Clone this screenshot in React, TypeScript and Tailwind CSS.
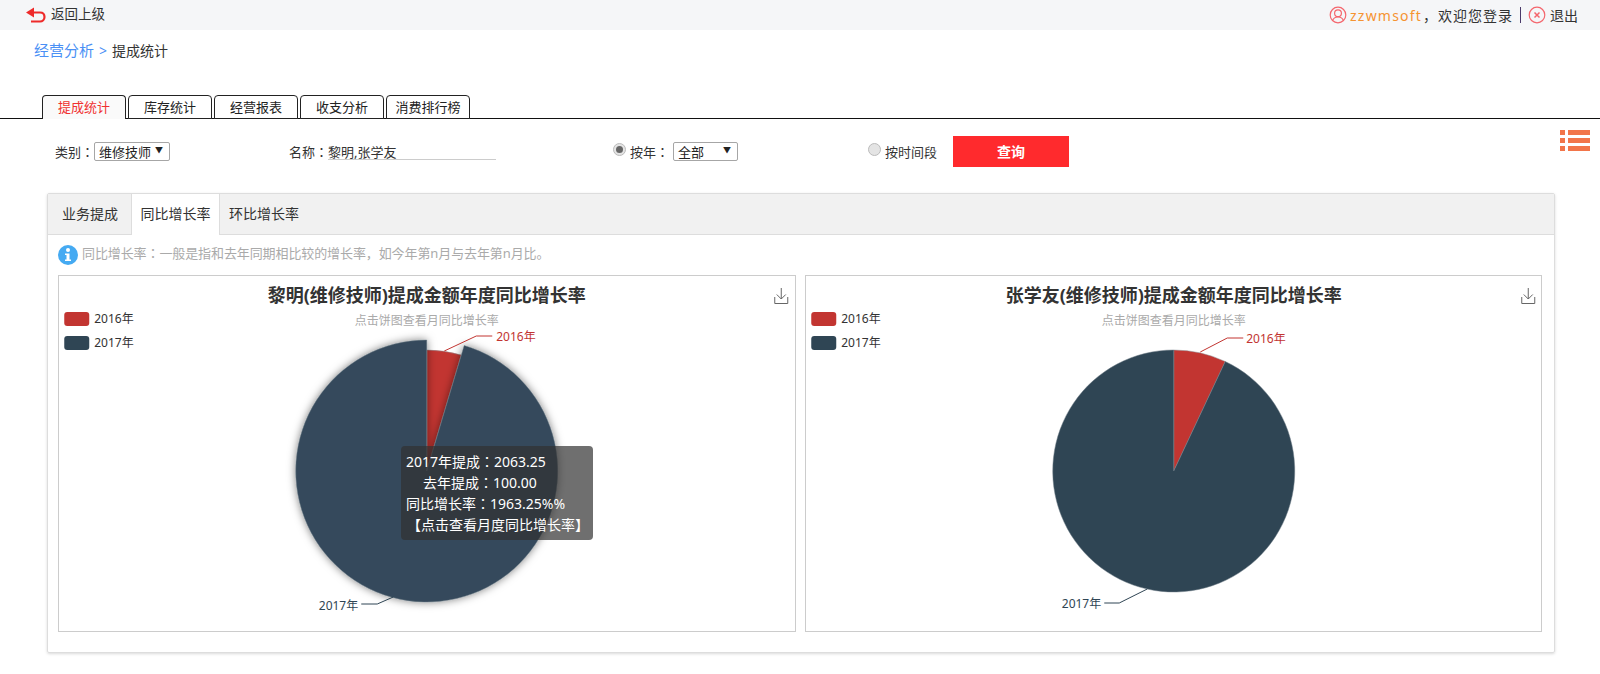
import { ReactNode } from "react"

const font = { fontFamily: '"Noto Sans", "Noto Sans CJK SC", sans-serif' }

type PieProps = {
  title: string
  redDeg: number
  hovered?: boolean
  line2016: string
  text2016: [number, number]
  line2017: string
  text2017: [number, number]
}

const cx = 367.5
const cy = 195

function pt(r: number, deg: number) {
  const a = (deg * Math.PI) / 180
  return [cx + r * Math.sin(a), cy - r * Math.cos(a)]
}

function slice(r: number, from: number, to: number) {
  const [x1, y1] = pt(r, from)
  const [x2, y2] = pt(r, to)
  const large = to - from > 180 ? 1 : 0
  return `M${cx} ${cy}L${x1} ${y1}A${r} ${r} 0 ${large} 1 ${x2} ${y2}Z`
}

// the fullwidth colon sits centred in the reference, as the TC face draws it
function Colon() {
  return <span className="font-['Noto_Sans_CJK_TC']">：</span>
}

function PieCard({ title, redDeg, hovered, line2016, text2016, line2017, text2017 }: PieProps) {
  return (
    <div className="relative flex-1 h-[357px] border border-[#ccc] bg-white">
      <svg width="100%" height="355" viewBox="0 0 735 355" style={font}>
        <defs>
          <filter id="pieShadow" x="-20%" y="-20%" width="140%" height="140%">
            <feDropShadow dx="0" dy="0" stdDeviation="4" floodColor="#000" floodOpacity="0.5" />
          </filter>
        </defs>
        <text x={cx} y="21" textAnchor="middle" dominantBaseline="middle" fontSize="18" fontWeight="700" fill="#333">{title}</text>
        <text x={cx} y="46" textAnchor="middle" dominantBaseline="middle" fontSize="12" fill="#aaa">点击饼图查看月同比增长率</text>

        <rect x="5" y="36" width="25" height="14" rx="3" fill="#c23531" />
        <text x="35" y="44" dominantBaseline="middle" fontSize="12" fill="#333">2016年</text>
        <rect x="5" y="60" width="25" height="14" rx="3" fill="#2f4554" />
        <text x="35" y="68" dominantBaseline="middle" fontSize="12" fill="#333">2017年</text>

        <path d={slice(121, 0, redDeg)} fill="#c23531" stroke="#8a8f94" strokeWidth="0.5" />
        <path
          d={slice(hovered ? 131 : 121, redDeg, 360)}
          fill={hovered ? "#34495b" : "#2f4554"}
          stroke="#6f7c86"
          strokeWidth="0.5"
          filter={hovered ? "url(#pieShadow)" : undefined}
        />

        <path d={line2016} fill="none" stroke="#c23531" />
        <text x={text2016[0]} y={text2016[1]} dominantBaseline="middle" fontSize="12" fill="#c23531">2016年</text>
        <path d={line2017} fill="none" stroke="#2f4554" />
        <text x={text2017[0]} y={text2017[1]} textAnchor="end" dominantBaseline="middle" fontSize="12" fill="#2f4554">2017年</text>

        <g transform="translate(715 12)" fill="none" stroke="#666" strokeWidth="1">
          <path d="M7 0V11M2.5 6.5L7 11L11.5 6.5" />
          <path d="M0.5 9V15.5H13.5V9" />
        </g>
      </svg>
      {hovered && (
        <div className="absolute left-[342px] top-[170px] w-[192px] h-[94px] rounded bg-[rgba(50,50,50,0.7)] py-[5px] text-[14px] leading-[21px] text-white whitespace-nowrap">
          <div className="pl-[5px]">2017年提成<Colon />2063.25</div>
          <div className="pl-[22px]">去年提成<Colon />100.00</div>
          <div className="pl-[5px]">同比增长率<Colon />1963.25%%</div>
          <div className="pl-[6px]">【点击查看月度同比增长率】</div>
        </div>
      )}
    </div>
  )
}

function Tab({ children, active }: { children: ReactNode; active?: boolean }) {
  return (
    <div
      className={`w-[84px] h-[24px] border border-[#222] rounded-t-[4px] text-center text-[13px] leading-[22px] ${
        active ? "border-b-0 bg-[#fafafa] text-[#f03030]" : "text-[#222] bg-white"
      }`}
    >
      {children}
    </div>
  )
}

function Radio({ checked }: { checked?: boolean }) {
  return (
    <span className="w-[13px] h-[13px] mb-[4px] rounded-full border border-[#bbb] bg-[#e4e4e4] flex items-center justify-center shrink-0">
      {checked && <span className="w-[7px] h-[7px] rounded-full bg-[#666]" />}
    </span>
  )
}

function FakeSelect({ label, width }: { label: string; width: string }) {
  return (
    <div className={`${width} h-[19px] border border-[#a6a6a6] rounded-[2px] flex items-center justify-between pl-[4px] pr-[6px] text-[13px] text-[#222] bg-white`}>
      <span className="pt-[2px]">{label}</span>
      <span className="text-[8px] leading-none mb-[3px]">▼</span>
    </div>
  )
}

export default function App() {
  return (
    <div className="w-[1600px] h-[674px] overflow-hidden bg-white text-[#333]" style={font}>
      <header className="h-[30px] bg-[#f5f6f8] flex items-center justify-between pl-[26px] pr-[22px] text-[14px]">
        <div className="flex items-center gap-[5px] text-[#333] text-[13.5px]">
          <svg width="20" height="16" viewBox="0 0 20 16" fill="none">
            <path d="M0 5.5L8 0.5V10.5Z" fill="#ee2a2a" />
            <path d="M7 5.5H14C17 5.5 18.5 7.5 18.5 10C18.5 12.5 16.5 14.5 14 14.5H5" stroke="#ee2a2a" strokeWidth="2.2" />
          </svg>
          <span className="pb-[1px]">返回上级</span>
        </div>
        <div className="flex items-center">
          <svg width="18" height="18" viewBox="0 0 18 18" fill="none" stroke="#f4666d" strokeWidth="1.2" className="mr-[3px]">
            <circle cx="9" cy="9" r="7.8" />
            <circle cx="9" cy="7.2" r="3.4" />
            <path d="M3.6 14.5C4.5 12 6.5 11 9 11C11.5 11 13.5 12 14.4 14.5" />
          </svg>
          <span className="text-[#f59331] tracking-[1.2px]">zzwmsoft</span>
          <span className="ml-[1px] tracking-[1px]">，欢迎您登录</span>
          <span className="ml-[7px] mr-[7px] w-px h-[16px] bg-[#4a3a6a]" />
          <svg width="18" height="18" viewBox="0 0 18 18" fill="none" stroke="#f4666d" strokeWidth="1.2" className="mr-[4px]">
            <circle cx="9" cy="9" r="7.8" />
            <path d="M6.5 6.5L11.5 11.5M11.5 6.5L6.5 11.5" strokeWidth="1.5" />
          </svg>
          <span>退出</span>
        </div>
      </header>

      <div className="pl-[34px] pt-[10px] h-[65px] text-[14px] leading-[20px]">
        <span className="text-[15px] text-[#4a90f5]">经营分析</span>
        <span className="text-[#4a90f5] mx-[5px]">&gt;</span>
        <span>提成统计</span>
      </div>

      <nav className="flex gap-[2px] pl-[42px] border-b border-[#111] h-[24px]">
        <Tab active>提成统计</Tab>
        <Tab>库存统计</Tab>
        <Tab>经营报表</Tab>
        <Tab>收支分析</Tab>
        <Tab>消费排行榜</Tab>
      </nav>

      <div className="relative flex items-center h-[31px] mt-[17px] pl-[55px] text-[13px]">
        <span className="pt-[2px]">类别<Colon /></span>
        <FakeSelect label="维修技师" width="w-[76px]" />
        <span className="ml-[119px] pt-[2px]">名称<Colon /></span>
        <span className="w-[168px] border-b border-[#ccc] leading-[14px] pt-[1px] text-[#333]">黎明,张学友</span>
        <span className="ml-[117px]"><Radio checked /></span>
        <span className="ml-[4px] mr-[4px] pt-[2px]">按年<Colon /></span>
        <FakeSelect label="全部" width="w-[65px]" />
        <span className="ml-[130px]"><Radio /></span>
        <span className="ml-[4px] pt-[2px]">按时间段</span>
        <button className="ml-[16px] w-[116px] h-[31px] bg-[#ff2a2d] text-white text-[14px] font-bold">查询</button>
        <svg width="30" height="21" viewBox="0 0 30 21" fill="#f2754a" className="absolute right-[10px] -top-[6px]">
          <rect x="0" y="0" width="5" height="5" />
          <rect x="8" y="0" width="22" height="5" />
          <rect x="0" y="8" width="5" height="5" />
          <rect x="8" y="8" width="22" height="5" />
          <rect x="0" y="16" width="5" height="5" />
          <rect x="8" y="16" width="22" height="5" />
        </svg>
      </div>

      <section className="ml-[47px] mt-[26px] w-[1508px] h-[460px] border border-[#ddd] rounded-[2px] shadow-[0_1px_3px_rgba(0,0,0,0.15)]">
        <div className="flex h-[41px] bg-[#f1f1f1] border-b border-[#ddd] text-[14px]">
          <div className="w-[83px] pl-[14px] leading-[40px]">业务提成</div>
          <div className="w-[89px] h-[41px] bg-white border-r border-l border-[#ddd] text-center leading-[40px]">同比增长率</div>
          <div className="pl-[9px] leading-[40px]">环比增长率</div>
        </div>
        <div className="flex items-center h-[40px] pl-[10px] text-[13px] text-[#aaa]">
          <svg width="20" height="20" viewBox="0 0 20 20" className="mr-[4px]">
            <circle cx="10" cy="10" r="10" fill="#45aaf2" />
            <circle cx="10" cy="5" r="2" fill="#fff" />
            <path d="M7 8.5H11.5V14.5H13V16H7V14.5H8.5V10H7Z" fill="#fff" />
          </svg>
          <span className="pb-[3px] tracking-[-0.1px]">同比增长率<Colon />一般是指和去年同期相比较的增长率，如今年第n月与去年第n月比。</span>
        </div>
        <div className="flex gap-[9px] pl-[10px] pr-[12px]">
          <PieCard
            title="黎明(维修技师)提成金额年度同比增长率"
            redDeg={16.6}
            hovered
            line2016="M385 75L417 60H433"
            text2016={[437, 62]}
            line2017="M334 321L318 328H302"
            text2017={[299, 331]}
          />
          <PieCard
            title="张学友(维修技师)提成金额年度同比增长率"
            redDeg={25.2}
            line2016="M394 76L421 62H437"
            text2016={[440, 64]}
            line2017="M341 313L313 327H298"
            text2017={[295, 329]}
          />
        </div>
      </section>
    </div>
  )
}
